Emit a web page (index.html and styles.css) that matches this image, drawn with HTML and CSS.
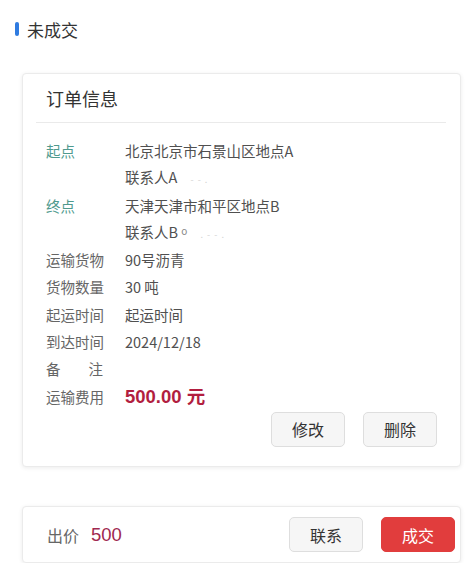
FILE: index.html
```html
<!DOCTYPE html>
<html lang="zh">
<head>
<meta charset="utf-8">
<link rel="stylesheet" href="styles.css">
</head>
<body>
<div class="page">
  <div class="status"><span class="status-bar"></span><span class="status-text">未成交</span></div>

  <div class="card order">
    <div class="order-title">订单信息</div>
    <div class="divider"></div>
    <div class="rows">
      <div class="row"><span class="label teal">起点</span><span class="value">北京北京市石景山区地点A</span></div>
      <div class="row"><span class="label"></span><span class="value">联系人A <span class="blur">- - .</span></span></div>
      <div class="row"><span class="label teal">终点</span><span class="value">天津天津市和平区地点B</span></div>
      <div class="row"><span class="label"></span><span class="value">联系人B <span class="tiny">o</span> <span class="blur">. - - .</span></span></div>
      <div class="row"><span class="label">运输货物</span><span class="value">90号沥青</span></div>
      <div class="row"><span class="label">货物数量</span><span class="value">30 吨</span></div>
      <div class="row"><span class="label">起运时间</span><span class="value">起运时间</span></div>
      <div class="row"><span class="label">到达时间</span><span class="value">2024/12/18</span></div>
      <div class="row"><span class="label spread"><span>备</span><span>注</span></span><span class="value"></span></div>
      <div class="row"><span class="label">运输费用</span><span class="value price">500.00 元</span></div>
    </div>
    <div class="actions">
      <button class="btn">修改</button>
      <button class="btn">删除</button>
    </div>
  </div>

  <div class="card bid">
    <div class="bid-info"><span class="bid-label">出价</span><span class="bid-value">500</span></div>
    <div class="bid-actions">
      <button class="btn">联系</button>
      <button class="btn btn-red">成交</button>
    </div>
  </div>
</div>
</body>
</html>
```

FILE: styles.css
```css
* { box-sizing: border-box; }
html, body {
  margin: 0;
  padding: 0;
  background: #ffffff;
}
body {
  font-family: "Noto Sans CJK SC", "Liberation Sans", sans-serif;
  color: #444;
}
.page {
  width: 466px;
  padding-top: 20px;
}
.status {
  display: flex;
  align-items: center;
  padding-left: 15px;
  height: 18px;
}
.status-bar {
  width: 4px;
  height: 14px;
  border-radius: 2px;
  background: #2f7be0;
  margin-right: 8px;
}
.status-text {
  font-size: 17px;
  color: #333;
}
.card {
  margin-left: 22px;
  width: 439px;
  background: #fff;
  border: 1px solid #ebebeb;
  border-radius: 4px;
  box-shadow: 0 1px 4px rgba(0,0,0,0.08);
}
.order {
  margin-top: 35px;
  height: 394px;
  padding: 0 14px 0 13px;
}
.order-title {
  font-size: 18px;
  color: #333;
  padding-left: 10px;
  height: 48px;
  line-height: 48px;
}
.divider {
  height: 1px;
  background: #eaeaea;
}
.rows {
  padding-top: 14px;
  padding-left: 10px;
}
.row {
  display: flex;
  height: 27.3px;
  line-height: 27.3px;
  font-size: 14.5px;
  align-items: center;
}
.label {
  width: 79px;
  color: #666;
  flex: none;
}
.label.teal { color: #4f9a8e; }
.label.spread {
  display: flex;
  justify-content: space-between;
  width: 57px;
  margin-right: 22px;
}
.value { color: #505050; }
.blur { color: #d4d4d4; font-size: 9px; letter-spacing: 1px; margin-left: 10px; }
.tiny { color: #888; font-size: 10px; vertical-align: 3px; }
.price {
  color: #b21e3f;
  font-weight: bold;
  font-size: 18.5px;
  font-family: "Liberation Sans", "Noto Sans CJK SC", sans-serif;
}
.actions {
  display: flex;
  justify-content: flex-end;
  gap: 18px;
  margin-top: 2px;
  padding-right: 9px;
}
.btn {
  width: 74px;
  height: 35px;
  border: 1px solid #dedede;
  border-radius: 5px;
  background: #f6f6f6;
  font-family: "Noto Sans CJK SC", sans-serif;
  font-size: 16px;
  color: #333;
  padding: 0;
}
.btn-red {
  background: #e13d3d;
  border-color: #e13d3d;
  color: #fff;
}
.bid {
  margin-top: 39px;
  height: 57px;
  display: flex;
  align-items: center;
  justify-content: space-between;
  padding: 0 5px 0 24px;
}
.bid-info {
  display: flex;
  align-items: center;
}
.bid-label {
  font-size: 16px;
  color: #666;
  margin-right: 12px;
}
.bid-value {
  font-size: 18.5px;
  color: #a0284f;
  font-family: "Liberation Sans", sans-serif;
}
.bid-actions {
  display: flex;
  gap: 18px;
}
```
